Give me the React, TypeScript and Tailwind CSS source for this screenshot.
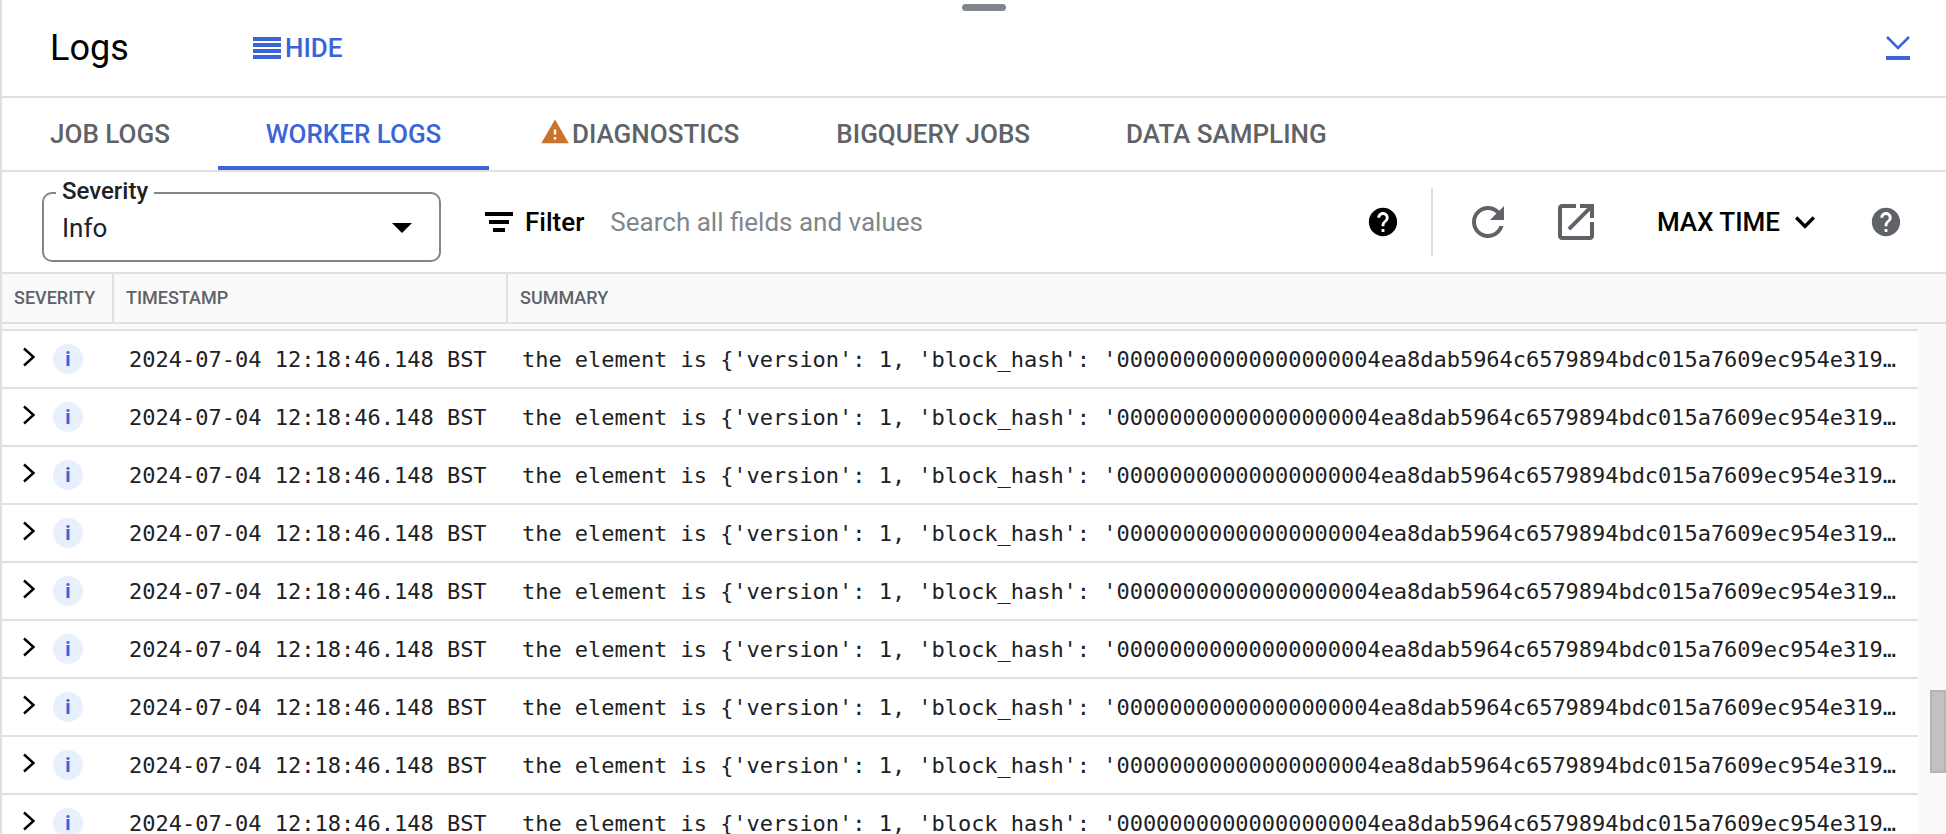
import React from "react";

const roboto = "font-['Roboto',sans-serif]";
const P = ({ d, cls }: { d: string; cls: string }) => (
  <svg viewBox="0 0 24 24" className={cls} fill="currentColor"><path d={d} /></svg>
);
const help = "M12 2C6.48 2 2 6.48 2 12s4.48 10 10 10 10-4.48 10-10S17.52 2 12 2zm1 17h-2v-2h2v2zm2.07-7.75l-.9.92C13.45 12.9 13 13.5 13 15h-2v-.5c0-1.1.45-2.1 1.17-2.83l1.24-1.26c.37-.36.59-.86.59-1.41 0-1.1-.9-2-2-2s-2 .9-2 2H8c0-2.21 1.79-4 4-4s4 1.79 4 4c0 .88-.36 1.68-.93 2.25z";
const SUMMARY = "the element is {'version': 1, 'block_hash': '00000000000000000004ea8dab5964c6579894bdc015a7609ec954e31900000000000000000000000000000000";

const Row = () => (
  <div className="flex h-[58px] shrink-0 items-center border-b-2 border-[#e0e0e0] bg-white">
    <svg viewBox="0 0 14 20" className="ml-[20px] mt-[-4px] w-[14px] h-[20px] shrink-0 text-black" fill="none">
      <path d="M2 1.5L11.5 10L2 18.5" stroke="currentColor" strokeWidth="2.4" />
    </svg>
    <div className="ml-[17px] w-[30px] h-[30px] rounded-full bg-[#e8f0fe] flex items-center justify-center shrink-0">
      <span className="font-['Roboto',sans-serif] font-bold text-[#3367d6] text-[20px] leading-none">i</span>
    </div>
    <div className="ml-[46px] w-[393px] shrink-0 font-['DejaVu_Sans_Mono',monospace] text-[22px] text-[#202124] whitespace-pre">2024-07-04 12:18:46.148 BST</div>
    <div className="w-[1377px] truncate font-['DejaVu_Sans_Mono',monospace] text-[22px] tracking-[-0.035px] text-[#202124] whitespace-pre">{SUMMARY}</div>
  </div>
);

const Tab = ({ label, active, cls }: { label: React.ReactNode; active?: boolean; cls: string }) => (
  <div className={`h-[72px] flex items-center justify-center text-[26px] font-medium ${cls} ${active ? "text-[#3b65d6] border-b-4 border-[#3b65d6] pt-[4px]" : "text-[#5f6368]"}`}>
    {label}
  </div>
);

export default function App() {
  return (
    <div className={`relative w-[1946px] h-[834px] overflow-hidden bg-white ${roboto} border-l-2 border-[#e0e0e0] flex flex-col`}>
      <div className="absolute left-[960px] top-[4px] w-[44px] h-[7px] rounded-full bg-[#80868b]" />

      <div className="h-[98px] shrink-0 flex items-center border-b-2 border-[#e0e0e0]">
        <div className="ml-[48px] w-[203px] text-[36px] text-black">Logs</div>
        <div className="flex items-center text-[#3b65d6] text-[26px] font-medium">
          <div className="w-[28px] h-[22px] flex flex-col justify-between mr-[4px]">
            <div className="h-[4px] bg-[#3b65d6]" /><div className="h-[4px] bg-[#3b65d6]" /><div className="h-[4px] bg-[#3b65d6]" /><div className="h-[4px] bg-[#3b65d6]" />
          </div>
          HIDE
        </div>
        <div className="ml-auto mr-[36px] text-[#3b65d6]">
          <svg viewBox="0 0 24 24" className="w-[24px] h-[24px]" fill="none">
            <path d="M1 1l11 11L23 1" stroke="currentColor" strokeWidth="2.6" />
            <rect x="0" y="20" width="24" height="4" fill="currentColor" />
          </svg>
        </div>
      </div>

      <div className="h-[74px] shrink-0 flex items-stretch border-b-2 border-[#e0e0e0]">
        <Tab label="JOB LOGS" cls="w-[216px]" />
        <Tab label="WORKER LOGS" active cls="w-[271px]" />
        <Tab cls="ml-[51px] mr-[97px]" label={<><P d="M1 21h22L12 2 1 21zm12-3h-2v-2h2v2zm0-4h-2v-4h2v4z" cls="w-[30px] h-[30px] text-[#c9722b] mr-[2px] mt-[-4px]" />DIAGNOSTICS</>} />
        <Tab label="BIGQUERY JOBS" cls="mr-[96px]" />
        <Tab label="DATA SAMPLING" cls="" />
      </div>

      <div className="h-[102px] shrink-0 flex items-center border-b-2 border-[#e0e0e0]">
        <div className="relative ml-[40px] mt-[10px] w-[399px] h-[70px] border-2 border-[#80868b] rounded-[10px] flex items-center pl-[18px] pr-[13px]">
          <span className="absolute left-[12px] top-[-17px] bg-white px-[6px] text-[24px] leading-[28px] font-medium text-[#202124]">Severity</span>
          <span className="text-[26px] text-[#202124] mt-[2px]">Info</span>
          <P d="M7 10l5 5 5-5z" cls="ml-auto w-[48px] h-[48px] text-black" />
        </div>
        <svg viewBox="0 0 28 20" className="ml-[44px] w-[28px] h-[20px] text-black" fill="currentColor">
          <rect x="0" y="0" width="28" height="4" /><rect x="4" y="8" width="20" height="4" /><rect x="8" y="16" width="12" height="4" />
        </svg>
        <span className="ml-[12px] text-[26px] font-medium text-black">Filter</span>
        <span className="ml-[26px] text-[26px] text-[#80868b]">Search all fields and values</span>
        <P d={help} cls="ml-auto w-[34px] h-[34px] text-black" />
        <div className="ml-[31px] w-[2px] h-[68px] bg-[#e0e0e0]" />
        <P d="M17.65 6.35C16.2 4.9 14.21 4 12 4c-4.42 0-7.99 3.58-7.99 8s3.57 8 7.99 8c3.73 0 6.84-2.55 7.73-6h-2.08c-.82 2.33-3.04 4-5.65 4-3.31 0-6-2.69-6-6s2.69-6 6-6c1.66 0 3.14.69 4.22 1.78L13 11h7V4l-2.35 2.35z" cls="ml-[31px] w-[48px] h-[48px] text-[#5f6368]" />
        <P d="M19 19H5V5h7V3H5c-1.11 0-2 .9-2 2v14c0 1.1.89 2 2 2h14c1.1 0 2-.9 2-2v-7h-2v7zM14 3v2h3.59l-9.83 9.83 1.41 1.41L19 6.41V10h2V3h-7z" cls="ml-[40px] w-[48px] h-[48px] text-[#5f6368]" />
        <span className="ml-[57px] text-[26px] font-medium text-black">MAX TIME</span>
        <P d="M16.59 8.59L12 13.17 7.41 8.59 6 10l6 6 6-6z" cls="ml-[5px] w-[40px] h-[40px] text-black" />
        <P d={help} cls="ml-[44px] mr-[43px] w-[34px] h-[34px] text-[#5f6368]" />
      </div>

      <div className="h-[50px] shrink-0 flex items-stretch bg-[#fafafa] border-b-2 border-[#e0e0e0] text-[18px] font-medium text-[#5f6368]">
        <div className="w-[112px] pl-[12px] pb-[2px] flex items-center border-r-2 border-[#e0e0e0]">SEVERITY</div>
        <div className="w-[394px] pl-[12px] pb-[2px] flex items-center border-r-2 border-[#e0e0e0]">TIMESTAMP</div>
        <div className="pl-[12px] pb-[2px] flex items-center">SUMMARY</div>
      </div>

      <div className="flex flex-1 min-h-0">
        <div className="w-[1916px] shrink-0 flex flex-col">
          <div className="h-[7px] shrink-0 border-b-2 border-[#e0e0e0] bg-[#fafafa]" />
          {Array.from({ length: 9 }, (_, i) => <Row key={i} />)}
        </div>
        <div className="flex-1 bg-[#fafafa] relative">
          <div className="absolute right-0 top-[366px] w-[16px] h-[83px] bg-[#c1c1c1] border-2 border-[#b4b4b4]" />
        </div>
      </div>
    </div>
  );
}
